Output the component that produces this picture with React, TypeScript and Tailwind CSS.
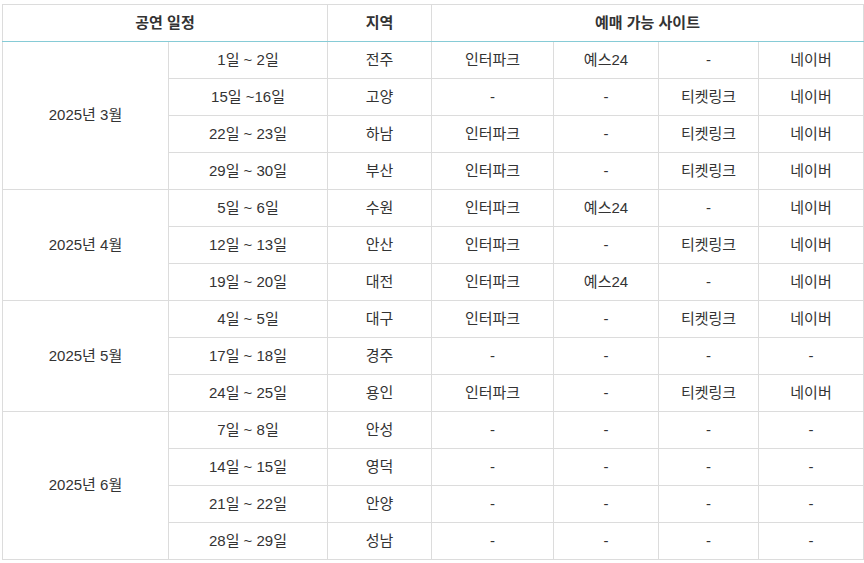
import React from "react";

type Row = { date: string; region: string; sites: [string, string, string, string] };
type Month = { label: string; rows: Row[] };

const months: Month[] = [
  {
    label: "2025년 3월",
    rows: [
      { date: "1일 ~ 2일", region: "전주", sites: ["인터파크", "예스24", "-", "네이버"] },
      { date: "15일 ~16일", region: "고양", sites: ["-", "-", "티켓링크", "네이버"] },
      { date: "22일 ~ 23일", region: "하남", sites: ["인터파크", "-", "티켓링크", "네이버"] },
      { date: "29일 ~ 30일", region: "부산", sites: ["인터파크", "-", "티켓링크", "네이버"] },
    ],
  },
  {
    label: "2025년 4월",
    rows: [
      { date: "5일 ~ 6일", region: "수원", sites: ["인터파크", "예스24", "-", "네이버"] },
      { date: "12일 ~ 13일", region: "안산", sites: ["인터파크", "-", "티켓링크", "네이버"] },
      { date: "19일 ~ 20일", region: "대전", sites: ["인터파크", "예스24", "-", "네이버"] },
    ],
  },
  {
    label: "2025년 5월",
    rows: [
      { date: "4일 ~ 5일", region: "대구", sites: ["인터파크", "-", "티켓링크", "네이버"] },
      { date: "17일 ~ 18일", region: "경주", sites: ["-", "-", "-", "-"] },
      { date: "24일 ~ 25일", region: "용인", sites: ["인터파크", "-", "티켓링크", "네이버"] },
    ],
  },
  {
    label: "2025년 6월",
    rows: [
      { date: "7일 ~ 8일", region: "안성", sites: ["-", "-", "-", "-"] },
      { date: "14일 ~ 15일", region: "영덕", sites: ["-", "-", "-", "-"] },
      { date: "21일 ~ 22일", region: "안양", sites: ["-", "-", "-", "-"] },
      { date: "28일 ~ 29일", region: "성남", sites: ["-", "-", "-", "-"] },
    ],
  },
];

const cell = "h-[37px] border border-[#dcdcdc] p-0 text-center align-middle";

export default function App() {
  return (
    <div
      className="bg-white px-[2px] pt-[4px] text-[15px] text-[#333]"
      style={{ fontFamily: '"Liberation Sans", "Noto Sans CJK KR", sans-serif' }}
    >
      <table className="w-[861px] table-fixed border-collapse">
        <colgroup>
          <col className="w-[166px]" />
          <col className="w-[159px]" />
          <col className="w-[104px]" />
          <col className="w-[122px]" />
          <col className="w-[105px]" />
          <col className="w-[100px]" />
          <col className="w-[105px]" />
        </colgroup>
        <thead>
          <tr>
            <th colSpan={2} className={`${cell} border-b-[#86cbd6] font-bold`}>
              공연 일정
            </th>
            <th className={`${cell} border-b-[#86cbd6] font-bold`}>지역</th>
            <th colSpan={4} className={`${cell} border-b-[#86cbd6] font-bold`}>
              예매 가능 사이트
            </th>
          </tr>
        </thead>
        <tbody>
          {months.map((m) =>
            m.rows.map((r, i) => (
              <tr key={m.label + r.date}>
                {i === 0 && (
                  <td rowSpan={m.rows.length} className={cell}>
                    {m.label}
                  </td>
                )}
                <td className={cell}>{r.date}</td>
                <td className={cell}>{r.region}</td>
                {r.sites.map((s, j) => (
                  <td key={j} className={cell}>
                    {s}
                  </td>
                ))}
              </tr>
            ))
          )}
        </tbody>
      </table>
    </div>
  );
}
